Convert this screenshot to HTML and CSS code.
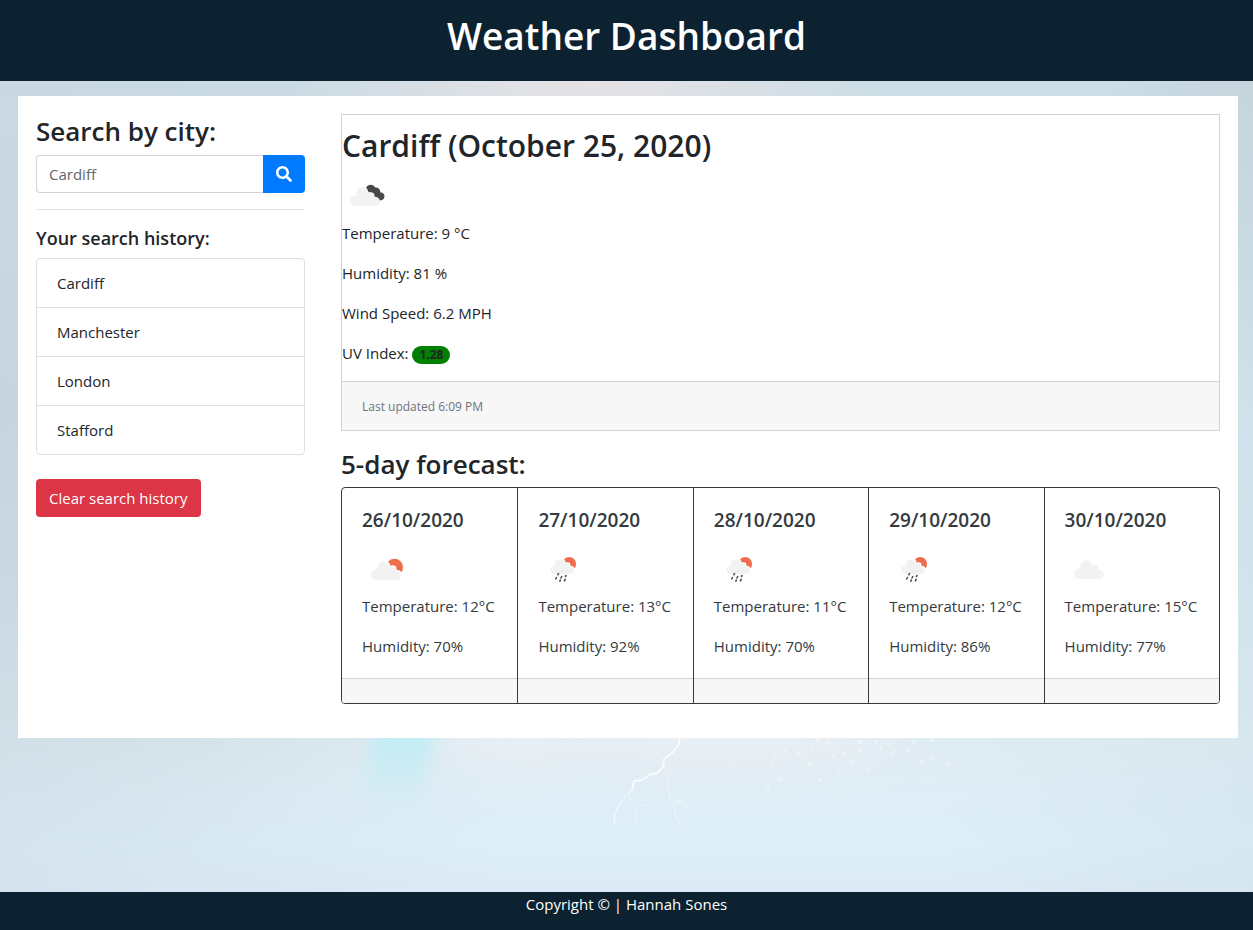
FILE: index.html
```html
<!DOCTYPE html>
<html lang="en">
<head>
<meta charset="utf-8">
<title>Weather Dashboard</title>
<link rel="stylesheet" href="styles.css">
</head>
<body>
<svg class="sprites" aria-hidden="true">
  <symbol id="cloud" viewBox="0 0 30 19">
    <circle cx="5.300" cy="13.700" r="5.300"/>
    <circle cx="12.300" cy="6.200" r="6"/>
    <circle cx="20.600" cy="9.300" r="4"/>
    <circle cx="25.400" cy="14.500" r="4.500"/>
    <path d="M5 8.500h15l6 10.500H5z"/>
  </symbol>
  <symbol id="icon-broken" viewBox="0 0 50 50">
    <path class="dark" d="M24 16.500A5.200 5.200 0 0 1 33.300 16.600a4.300 4.300 0 0 1 5 4.600 4.100 4.100 0 1 1-2 7.600c-.8-1.700-2-2.800-4-3.200-.6-3-3-4.700-5.800-4.400-.6-2-1.400-3.500-2.500-4.700z"/>
    <use class="pale" href="#cloud" x="8" y="16" width="30" height="19"/>
  </symbol>
  <symbol id="icon-few" viewBox="0 0 50 50">
    <circle class="sun" cx="32.500" cy="23.200" r="8.500"/>
    <use class="gap" href="#cloud" x="10" y="16" width="30" height="19"/>
    <use class="pale" href="#cloud" x="9" y="17" width="30" height="19"/>
  </symbol>
  <symbol id="icon-rain" viewBox="0 0 50 50">
    <circle class="sun" cx="31.200" cy="20" r="6.900"/>
    <use class="gap" href="#cloud" x="13" y="14" width="24" height="15"/>
    <use class="pale" href="#cloud" x="12" y="15" width="24" height="15"/>
    <path class="drops" d="M20.500 29.500l-.7 1.300M18.500 33.500l-.8 1.500M23.700 32.500l-.7 1.500M22.300 36l-.5 1.300M28 31.500l-.6 1M27.200 35.300l-.8 1.600"/>
  </symbol>
  <symbol id="icon-cloud" viewBox="0 0 50 50">
    <use class="pale" href="#cloud" x="9" y="16" width="30" height="19"/>
  </symbol>
</svg>

<header class="site-header"><h1>Weather Dashboard</h1></header>

<main class="stage">
  <svg class="backdrop" viewBox="0 0 1253 811" preserveAspectRatio="none" aria-hidden="true">
    <defs>
      <filter id="soft" x="-50%" y="-50%" width="200%" height="200%"><feGaussianBlur stdDeviation="18"/></filter>
      <filter id="edge" x="-50%" y="-50%" width="200%" height="200%"><feGaussianBlur stdDeviation="8"/></filter>
      <linearGradient id="beam-fade" x1="0" y1="0" x2="0" y2="1">
        <stop class="beam-start" offset="0.4"/>
        <stop class="beam-end" offset="1"/>
      </linearGradient>
    </defs>
    <path fill="url(#beam-fade)" filter="url(#edge)" d="M380 590h68l-28 140h-58z"/>
    <ellipse class="haze" filter="url(#soft)" cx="520" cy="655" rx="70" ry="40"/>
    <ellipse class="haze" filter="url(#soft)" cx="720" cy="650" rx="170" ry="45"/>
    <g class="bolt">
      <path class="bolt-main" d="M680 655l-1 8-7 9-8 6-1 8-6 6-8 2-7 5-8 1-2 9"/>
      <path class="bolt-mid" d="M632 709l-7 7-7 9-3 8-1 9"/>
      <path class="bolt-thin" d="M664 686l3 5v9l3 9-1 7 5 9 1 8 4 8-1 6M629 709l1 11 6 9-1 8 4 8M669 717l10 4 9 5M675 721l9-2M634 721l9 4 5-1M631 714l8 6"/>
    </g>
    <g class="spray">
      <path d="M775 674h.1M785 670h.1M799 673h.1M811 668h.1M818 659h.1M829 662h.1M833 674h.1M844 672h.1M869 688h.1M860 670h.1M881 667h.1M893 672h.1M909 669h.1M921 680h.1M933 678h.1M947 682h.1M914 661h.1M932 659h.1M779 698h.1M768 708h.1M809 683h.1M773 684h.1M839 690h.1M860 661h.1M876 661h.1M889 663h.1M851 681h.1M820 699h.1M841 711h.1"/>
    </g>
  </svg>

  <div class="panel">
    <aside class="sidebar">
      <form class="search">
        <label class="title" for="city">Search by city:</label>
        <div class="search-row">
          <input id="city" type="text" placeholder="Cardiff">
          <button type="button" class="search-button" aria-label="Search">
            <svg viewBox="0 0 512 512" aria-hidden="true"><path d="M505 442.700L405.300 343c-4.500-4.500-10.600-7-17-7H372c27.600-35.300 44-79.700 44-128C416 93.100 322.900 0 208 0S0 93.100 0 208s93.100 208 208 208c48.300 0 92.700-16.400 128-44v16.300c0 6.400 2.500 12.500 7 17l99.700 99.700c9.400 9.400 24.600 9.400 33.900 0l28.300-28.300c9.400-9.400 9.400-24.600.1-34zM208 336c-70.700 0-128-57.200-128-128 0-70.700 57.200-128 128-128 70.700 0 128 57.200 128 128 0 70.700-57.200 128-128 128z"/></svg>
          </button>
        </div>
      </form>
      <hr>
      <h2 class="subtitle">Your search history:</h2>
      <ul class="history">
        <li>Cardiff</li>
        <li>Manchester</li>
        <li>London</li>
        <li>Stafford</li>
      </ul>
      <button type="button" class="clear-button">Clear search history</button>
    </aside>

    <div class="content">
      <section class="current">
        <div class="current-body">
          <h2>Cardiff (October 25, 2020)</h2>
          <svg class="icon" role="img" aria-label="Broken clouds"><use href="#icon-broken"/></svg>
          <p>Temperature: 9 °C</p>
          <p>Humidity: 81 %</p>
          <p>Wind Speed: 6.2 MPH</p>
          <p>UV Index: <span class="badge">1.28</span></p>
        </div>
        <div class="current-footer">Last updated 6:09 PM</div>
      </section>

      <h2 class="title">5-day forecast:</h2>
      <section class="forecast">
        <article class="day">
          <div class="day-body">
            <h3>26/10/2020</h3>
            <svg class="icon" role="img" aria-label="Few clouds"><use href="#icon-few"/></svg>
            <p>Temperature: 12°C</p>
            <p>Humidity: 70%</p>
          </div>
          <div class="day-footer"></div>
        </article>
        <article class="day">
          <div class="day-body">
            <h3>27/10/2020</h3>
            <svg class="icon" role="img" aria-label="Rain"><use href="#icon-rain"/></svg>
            <p>Temperature: 13°C</p>
            <p>Humidity: 92%</p>
          </div>
          <div class="day-footer"></div>
        </article>
        <article class="day">
          <div class="day-body">
            <h3>28/10/2020</h3>
            <svg class="icon" role="img" aria-label="Rain"><use href="#icon-rain"/></svg>
            <p>Temperature: 11°C</p>
            <p>Humidity: 70%</p>
          </div>
          <div class="day-footer"></div>
        </article>
        <article class="day">
          <div class="day-body">
            <h3>29/10/2020</h3>
            <svg class="icon" role="img" aria-label="Rain"><use href="#icon-rain"/></svg>
            <p>Temperature: 12°C</p>
            <p>Humidity: 86%</p>
          </div>
          <div class="day-footer"></div>
        </article>
        <article class="day">
          <div class="day-body">
            <h3>30/10/2020</h3>
            <svg class="icon" role="img" aria-label="Cloudy"><use href="#icon-cloud"/></svg>
            <p>Temperature: 15°C</p>
            <p>Humidity: 77%</p>
          </div>
          <div class="day-footer"></div>
        </article>
      </section>
    </div>
  </div>
</main>

<footer class="site-footer">Copyright © | Hannah Sones</footer>
</body>
</html>
```
FILE: styles.css
```css
* { box-sizing: border-box; }

body {
  margin: 0;
  min-height: 100vh;
  display: flex;
  flex-direction: column;
  font-family: "Open Sans", "Noto Sans", sans-serif;
  font-size: 15px;
  line-height: 24px;
  color: #212529;
}

h1, h2, h3, p, ul { margin: 0; padding: 0; }

.sprites { position: absolute; width: 0; height: 0; }

.site-header {
  background: #0c2230;
  color: #fff;
  text-align: center;
  padding: 12px 0 21px;
}
.site-header h1 { font-size: 37px; font-weight: 600; line-height: 48px; }

.site-footer {
  background: #0c2230;
  color: #fff;
  text-align: center;
  padding-bottom: 14px;
}

.stage {
  position: relative;
  flex: 1;
  padding: 15px 15px 32px 18px;
  background:
    radial-gradient(ellipse 24% 10% at 47% 0, #e6e2e5, #e6e2e500),
    radial-gradient(ellipse 45% 60% at 0 40%, #c8d4dd, #c8d4dd00),
    radial-gradient(ellipse 12% 40% at 100% 0, #c6d4dc, #c6d4dc00),
    linear-gradient(90deg, #c9d8e366, #c9d8e300 40%, #c9d6df00 75%, #cddfe966),
    linear-gradient(#cbdde5, #d4e5ee 60%, #e0ecf3 82%, #ddeffa 94%, #dbeaf6);
}
.backdrop { position: absolute; inset: 0; width: 100%; height: 100%; }
.beam-start { stop-color: #bdedf5; }
.beam-end { stop-color: #bdedf5; stop-opacity: 0; }
.haze { fill: #e7eef4; }
.bolt, .spray { fill: none; stroke: #fff; stroke-linecap: round; stroke-linejoin: round; }
.bolt-main { stroke-width: 2; opacity: .8; }
.bolt-mid { stroke-width: 1; opacity: .8; }
.bolt-thin { stroke-width: 1; opacity: .4; }
.spray { stroke-width: 4; opacity: .3; }

.panel {
  position: relative;
  display: grid;
  grid-template-columns: 1fr 3fr;
  background: #fff;
}
.sidebar { padding: 18px; }
.content { padding: 18px 18px 34px; min-width: 0; }

.title { display: block; font-size: 26px; font-weight: 600; line-height: 34px; }
.subtitle { font-size: 18px; font-weight: 600; line-height: 24px; margin-bottom: 8px; }

.sidebar .title { margin-bottom: 7px; }
.search-row { display: flex; }
.search-row input {
  flex: 1;
  min-width: 0;
  height: 38px;
  padding: 6px 12px;
  border: 1px solid #ced4da;
  border-right: 0;
  border-radius: 4px 0 0 4px;
  font: inherit;
  color: #495057;
  background: #fff;
}
.search-row input::placeholder { color: #5f666d; opacity: 1; }
.search-button {
  width: 42px;
  height: 38px;
  padding: 0;
  display: grid;
  place-items: center;
  border: 0;
  border-radius: 0 4px 4px 0;
  background: #007bff;
}
.search-button svg { width: 16px; height: 16px; fill: #fff; }

hr { margin: 16px 0; border: 0; border-top: 1px solid #e5e5e5; }

.history { list-style: none; border: 1px solid #dfdfdf; border-radius: 4px; margin-bottom: 24px; }
.history li { padding: 12px 20px; }
.history li + li { border-top: 1px solid #dfdfdf; }

.clear-button {
  padding: 7px 13px;
  border: 0;
  border-radius: 4px;
  background: #dc3545;
  color: #fff;
  font: inherit;
}

.icon { display: block; width: 50px; height: 50px; }
.dark { fill: #484848; }
.pale { fill: #f2f2f2; }
.gap { fill: #fff; }
.sun { fill: #ec6e4c; }
.drops { stroke: #484848; stroke-width: 1.500; stroke-linecap: round; fill: none; }

.current { border: 1px solid #d3d3d3; margin-bottom: 16px; }
.current-body { padding-top: 12px; }
.current-body h2 { font-size: 30px; font-weight: 600; line-height: 38px; margin-bottom: 6px; }
.current p { margin-bottom: 16px; }
.current-footer {
  padding: 13px 20px 11px;
  border-top: 1px solid #d3d3d3;
  background: #f7f7f7;
  color: #6c757d;
  font-size: 12px;
}
.badge {
  display: inline-block;
  padding: 3px 7px;
  border-radius: 10px;
  background: #008000;
  font-size: 12px;
  font-weight: 700;
  line-height: 12px;
}

.content > .title { margin-bottom: 6px; }
.forecast {
  display: grid;
  grid-template-columns: repeat(5, 1fr);
  border: 1px solid #343a40;
  border-radius: 4px;
  overflow: hidden;
  color: #343a40;
}
.day + .day { border-left: 1px solid #343a40; }
.day-body { padding: 20px 0 20px 20px; }
.day h3 { font-size: 19px; font-weight: 600; line-height: 24px; margin-bottom: 12px; }
.day p + p { margin-top: 16px; }
.day-footer { height: 25px; border-top: 1px solid #d3d3d3; background: #f7f7f7; }
```
